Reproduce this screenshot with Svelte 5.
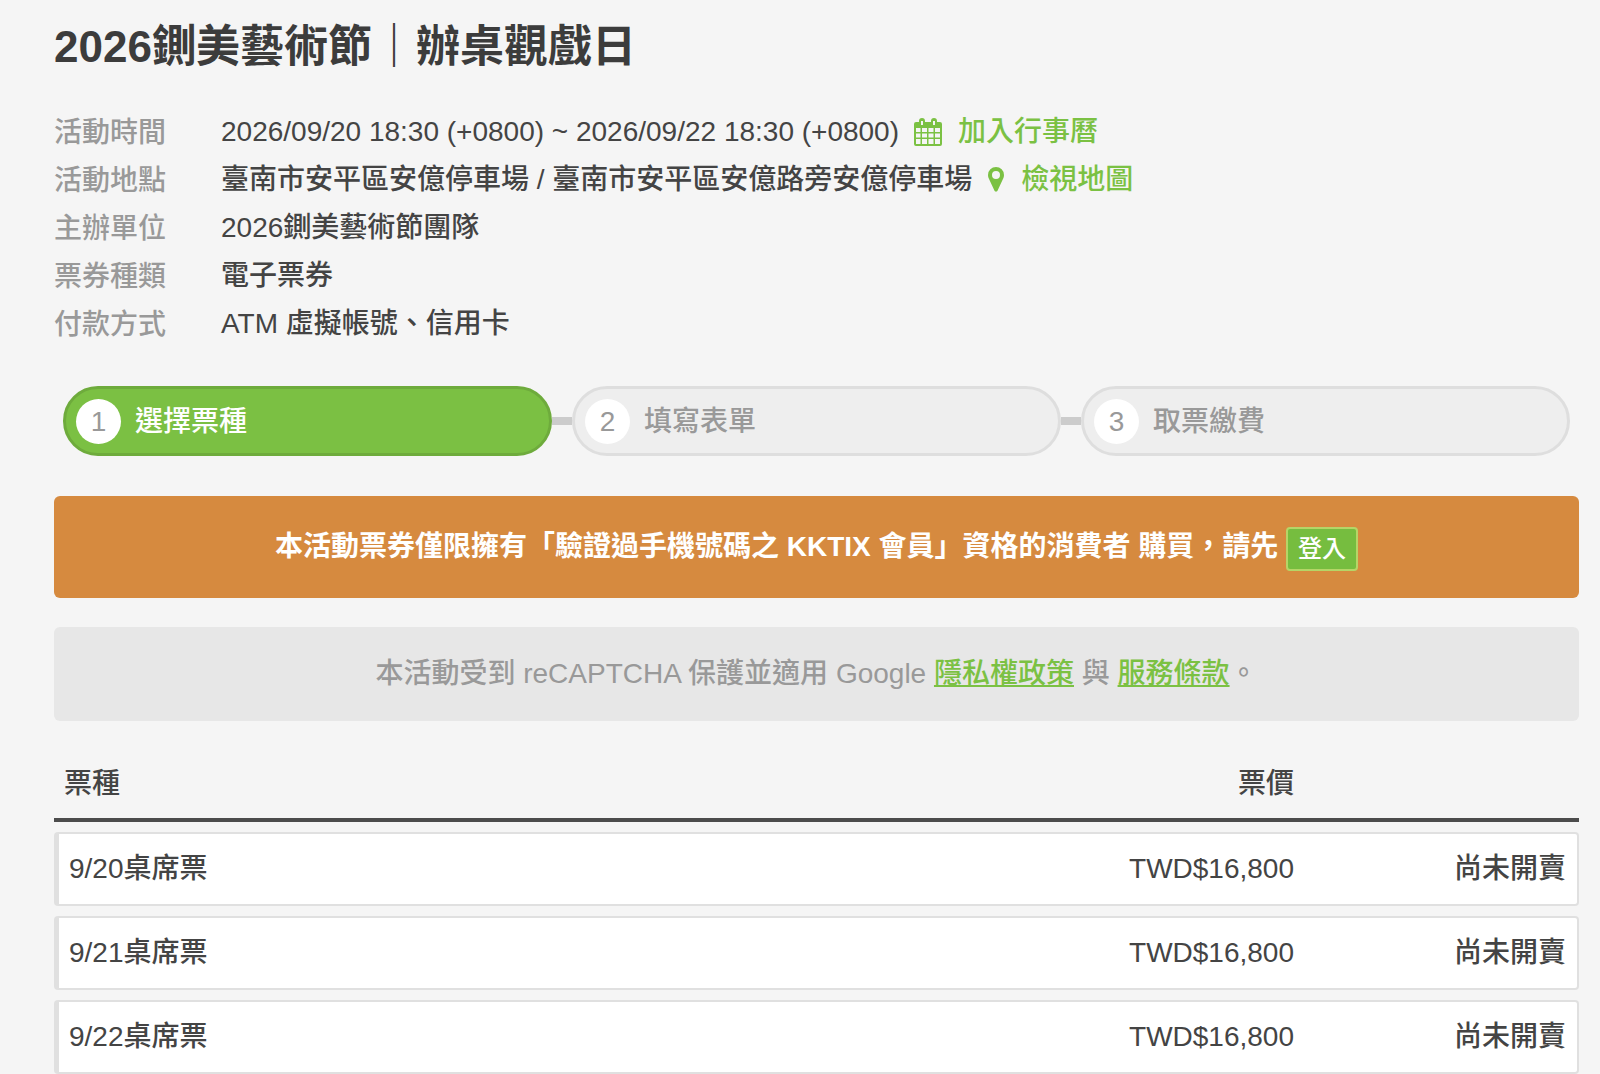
<script>
  const steps = ['選擇票種', '填寫表單', '取票繳費'];
  const tickets = ['9/20桌席票', '9/21桌席票', '9/22桌席票'];
</script>

<main>
  <h1>2026鍘美藝術節｜辦桌觀戲日</h1>

  <dl class="info">
    <dt>活動時間</dt>
    <dd>
      <span>2026/09/20 18:30 (+0800) ~ 2026/09/22 18:30 (+0800)</span>
      <a href="#calendar">
        <svg width="28" height="28" viewBox="0 0 28 28" aria-hidden="true">
          <path
            fill="currentColor"
            fill-rule="evenodd"
            d="M2 4h3V3a3 3 0 0 1 6 0v1h6V3a3 3 0 0 1 6 0v1h3a2 2 0 0 1 2 2v20a2 2 0 0 1-2 2H2a2 2 0 0 1-2-2V6a2 2 0 0 1 2-2zM7 3v4h2V3zM19 3v4h2V3zM2 10v4h4.500v-4zM8 10v4h5v-4zM14.500 10v4h5v-4zM21 10v4h5v-4zM2 15.500v4h4.500v-4zM8 15.500v4h5v-4zM14.500 15.500v4h5v-4zM21 15.500v4h5v-4zM2 21v5h4.500v-5zM8 21v5h5v-5zM14.500 21v5h5v-5zM21 21v5h5v-5z"
          />
        </svg>
        <span>加入行事曆</span>
      </a>
    </dd>
    <dt>活動地點</dt>
    <dd>
      <span>臺南市安平區安億停車場 / 臺南市安平區安億路旁安億停車場</span>
      <a href="#map">
        <svg width="18" height="28" viewBox="0 0 18 28" aria-hidden="true">
          <path
            fill="currentColor"
            fill-rule="evenodd"
            d="M9 1a8 8 0 0 1 8 8c0 1.500-.3 2.600-.8 3.600l-5.700 12.100a1.700 1.700 0 0 1-3 0L1.800 12.600C1.300 11.600 1 10.500 1 9a8 8 0 0 1 8-8zM9 5a4 4 0 1 0 0 8a4 4 0 0 0 0-8z"
          />
        </svg>
        <span>檢視地圖</span>
      </a>
    </dd>
    <dt>主辦單位</dt>
    <dd>2026鍘美藝術節團隊</dd>
    <dt>票券種類</dt>
    <dd>電子票券</dd>
    <dt>付款方式</dt>
    <dd>ATM 虛擬帳號、信用卡</dd>
  </dl>

  <ol class="steps">
    {#each steps as step, i}
      <li class:active={i === 0}>
        <span class="number">{i + 1}</span>
        <span class="label">{step}</span>
      </li>
    {/each}
  </ol>

  <p class="alert">
    本活動票券僅限擁有「驗證過手機號碼之 KKTIX 會員」資格的消費者 購買，請先
    <button type="button">登入</button>
  </p>

  <p class="captcha">
    本活動受到 reCAPTCHA 保護並適用 Google <a href="#privacy">隱私權政策</a> 與 <a href="#terms">服務條款</a>。
  </p>

  <table>
    <thead>
      <tr>
        <th class="name">票種</th>
        <th class="price">票價</th>
        <th class="status" aria-label="狀態"></th>
      </tr>
    </thead>
    <tbody>
      {#each tickets as ticket}
        <tr>
          <td class="name">{ticket}</td>
          <td class="price">TWD$16,800</td>
          <td class="status">尚未開賣</td>
        </tr>
      {/each}
    </tbody>
  </table>
</main>

<style>
  :global(body) {
    margin: 0;
    background: #f5f5f5;
  }

  main {
    padding: 17px 21px 0 54px;
    color: #444;
    font-family: 'Liberation Sans', 'Noto Sans CJK TC', sans-serif;
    font-size: 28px;
    font-weight: 500;
    line-height: 48px;
  }

  h1 {
    margin: 0;
    color: #3c3c3c;
    font-size: 44px;
    font-weight: 600;
    line-height: 60px;
  }

  .info {
    display: grid;
    grid-template-columns: 167px 1fr;
    margin: 31px 0 0;
  }

  dt {
    padding-top: 1px;
    color: #999;
    line-height: 47px;
  }

  dd {
    display: flex;
    gap: 15px;
    margin: 0;
  }

  a {
    color: #7bc143;
  }

  dd a {
    display: flex;
    align-items: center;
    gap: 16px;
    text-decoration: none;
  }

  .steps {
    display: flex;
    gap: 20px;
    margin: 38px 0 0;
    padding: 0 9px;
    list-style: none;
  }

  .steps li {
    position: relative;
    display: flex;
    flex: 1;
    align-items: center;
    gap: 14px;
    box-sizing: border-box;
    height: 70px;
    padding: 0 10px;
    border: 3px solid #dedede;
    border-radius: 35px;
    background: #eee;
    color: #999;
  }

  .steps li.active {
    border-color: #6eab3c;
    background: #7bc043;
    color: #fff;
  }

  .steps li + li::before {
    content: '';
    position: absolute;
    top: 28px;
    right: 100%;
    width: 20px;
    height: 8px;
    margin-right: 3px;
    background: #ccc;
  }

  .number {
    width: 45px;
    border-radius: 50%;
    background: #fff;
    color: #999;
    line-height: 45px;
    text-align: center;
  }

  .label {
    padding-top: 2px;
  }

  .alert,
  .captcha {
    border-radius: 6px;
    text-align: center;
  }

  .alert {
    margin: 40px 0 0;
    padding: 27px 0;
    background: #d68a3f;
    color: #fff;
    font-weight: 700;
  }

  button {
    box-sizing: border-box;
    height: 44px;
    padding: 0 10px;
    border: 2px solid #b5d567;
    border-radius: 4px;
    background: #76bd3f;
    color: #fff;
    font: inherit;
    font-size: 24px;
    font-weight: 500;
    line-height: 38px;
    vertical-align: middle;
  }

  .captcha {
    margin: 29px 0 0;
    padding: 23px 0;
    background: #e7e7e7;
    color: #999;
  }

  table {
    width: 100%;
    margin-top: 29px;
    border-spacing: 0 10px;
  }

  th {
    padding: 0 0 10px;
    border-bottom: 4px solid #4c4c4c;
    font-weight: 500;
  }

  .name {
    text-align: left;
  }

  .price {
    width: 300px;
    text-align: right;
  }

  .status {
    width: 272px;
    text-align: right;
  }

  th.name {
    padding-left: 10px;
  }

  td {
    padding: 11px 0;
    border: solid #e0e0e0;
    border-width: 2px 0;
    background: #fff;
  }

  td.name {
    padding-left: 10px;
    border-left-width: 5px;
    border-radius: 4px 0 0 4px;
  }

  td.status {
    padding-right: 11px;
    border-right-width: 2px;
    border-radius: 0 4px 4px 0;
  }
</style>
